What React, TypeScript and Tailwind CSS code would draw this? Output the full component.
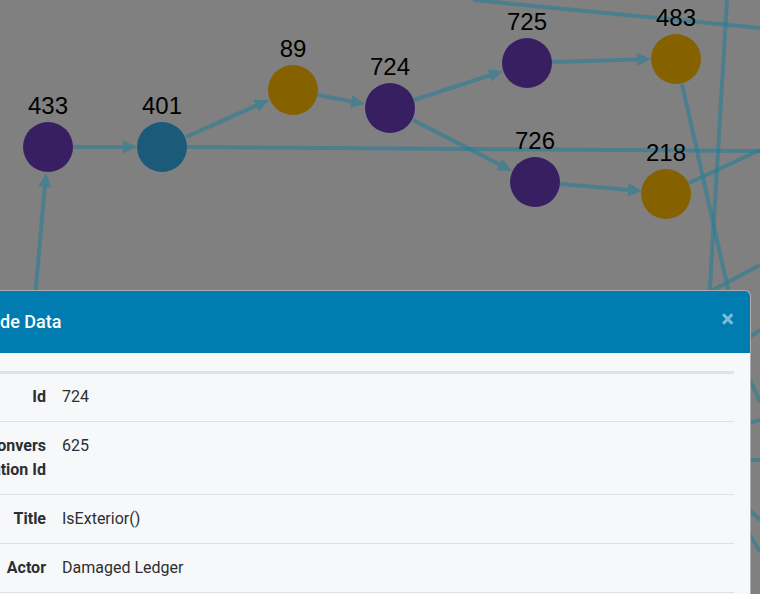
import React from 'react';

interface GraphNode {
    id: string;
    x: number;
    y: number;
    kind: 'purple' | 'teal' | 'gold';
}

interface Edge {
    x1: number;
    y1: number;
    x2: number;
    y2: number;
    arrow?: boolean;
}

const fills = {
    purple: '#371f62',
    teal: '#1b5a78',
    gold: '#856100',
};

const edgeColor = '#1f7d99';

const nodes: GraphNode[] = [
    { id: '433', x: 48, y: 147, kind: 'purple' },
    { id: '401', x: 162, y: 147, kind: 'teal' },
    { id: '89', x: 293, y: 90, kind: 'gold' },
    { id: '724', x: 390, y: 108, kind: 'purple' },
    { id: '725', x: 527, y: 63, kind: 'purple' },
    { id: '726', x: 535, y: 182, kind: 'purple' },
    { id: '483', x: 676, y: 59, kind: 'gold' },
    { id: '218', x: 666, y: 194, kind: 'gold' },
];

const edges: Edge[] = [
    { x1: 33, y1: 320, x2: 46, y2: 173, arrow: true },
    { x1: 73, y1: 147, x2: 137, y2: 147, arrow: true },
    { x1: 186, y1: 137, x2: 269, y2: 100, arrow: true },
    { x1: 187, y1: 147, x2: 760, y2: 151 },
    { x1: 318, y1: 95, x2: 365, y2: 104, arrow: true },
    { x1: 414, y1: 100, x2: 503, y2: 71, arrow: true },
    { x1: 413, y1: 120, x2: 512, y2: 171, arrow: true },
    { x1: 552, y1: 62, x2: 651, y2: 59, arrow: true },
    { x1: 560, y1: 184, x2: 642, y2: 191, arrow: true },
    { x1: 682, y1: 84, x2: 735, y2: 320 },
    { x1: 727, y1: 0, x2: 708, y2: 320 },
    { x1: 473, y1: 0, x2: 760, y2: 28 },
    { x1: 689, y1: 183, x2: 760, y2: 150 },
    { x1: 700, y1: 297, x2: 760, y2: 265 },
    // bits peeking out right of the dialog
    { x1: 738, y1: 345, x2: 760, y2: 330 },
    { x1: 742, y1: 362, x2: 760, y2: 402 },
    { x1: 738, y1: 426, x2: 760, y2: 420 },
    { x1: 738, y1: 460, x2: 760, y2: 460 },
    { x1: 742, y1: 503, x2: 760, y2: 520 },
    { x1: 742, y1: 522, x2: 760, y2: 552 },
];

const rows = [
    { label: <>Id</>, value: '724' },
    { label: <>Convers<br />ation Id</>, value: '625' },
    { label: <>Title</>, value: 'IsExterior()' },
    { label: <>Actor</>, value: 'Damaged Ledger' },
];

function EdgeLine({ e }: { e: Edge }) {
    if (!e.arrow) {
        return <line x1={e.x1} y1={e.y1} x2={e.x2} y2={e.y2} />;
    }
    const dx = e.x2 - e.x1;
    const dy = e.y2 - e.y1;
    const len = Math.hypot(dx, dy);
    const ux = dx / len;
    const uy = dy / len;
    const bx = e.x2 - ux * 14;
    const by = e.y2 - uy * 14;
    const w = 6.5;
    const pts = `${e.x2},${e.y2} ${bx - uy * w},${by + ux * w} ${bx + uy * w},${by - ux * w}`;
    return (
        <>
            <line x1={e.x1} y1={e.y1} x2={bx} y2={by} />
            <polygon points={pts} stroke="none" fill={edgeColor} fillOpacity={0.55} />
        </>
    );
}

function Graph() {
    return (
        <svg className="absolute inset-0" width={760} height={594} viewBox="0 0 760 594">
            <rect width={760} height={594} fill="#808080" />
            <g stroke={edgeColor} strokeOpacity={0.55} strokeWidth={4}>
                {edges.map((e, i) => (
                    <EdgeLine key={i} e={e} />
                ))}
            </g>
            {nodes.map((n) => (
                <circle key={n.id} cx={n.x} cy={n.y} r={25} fill={fills[n.kind]} />
            ))}
            {nodes.map((n) => (
                <text
                    key={'t' + n.id}
                    x={n.x}
                    y={n.y - 33}
                    textAnchor="middle"
                    fontSize={24}
                    fill="#000"
                    fontFamily="'Liberation Sans', Arial, sans-serif"
                >
                    {n.id}
                </text>
            ))}
        </svg>
    );
}

export default function App() {
    return (
        <div className="relative w-[760px] h-[594px] overflow-hidden bg-[#808080] font-['Roboto',sans-serif]">
            <Graph />

            {/* Node dialog */}
            <div className="absolute left-[-44px] top-[290px] w-[795px] h-[340px] rounded-md border border-black/30 bg-[#f7f8fa] overflow-hidden">
                <div className="flex items-start bg-[#007cb0] py-4 pl-[20px] pr-4">
                    <h5 className="text-[18px] leading-[30px] font-medium text-white">Node Data</h5>
                    <button className="ml-auto text-[24px] leading-none font-bold text-white/50">×</button>
                </div>
                <div className="px-4 pt-[18px] pb-4">
                    <table className="w-full border-collapse text-[16px] leading-6 text-[#2b2f33]">
                        <thead>
                            <tr className="border-t-[3px] border-[#dee2e6]" />
                        </thead>
                        <tbody>
                            {rows.map((r, i) => (
                                <tr key={i} className="border-b border-[#dee2e6] align-top">
                                    <th className="w-[81px] px-2 py-3 text-right font-bold">{r.label}</th>
                                    <td className="px-2 py-3 font-normal">{r.value}</td>
                                </tr>
                            ))}
                        </tbody>
                    </table>
                </div>
            </div>
        </div>
    );
}
